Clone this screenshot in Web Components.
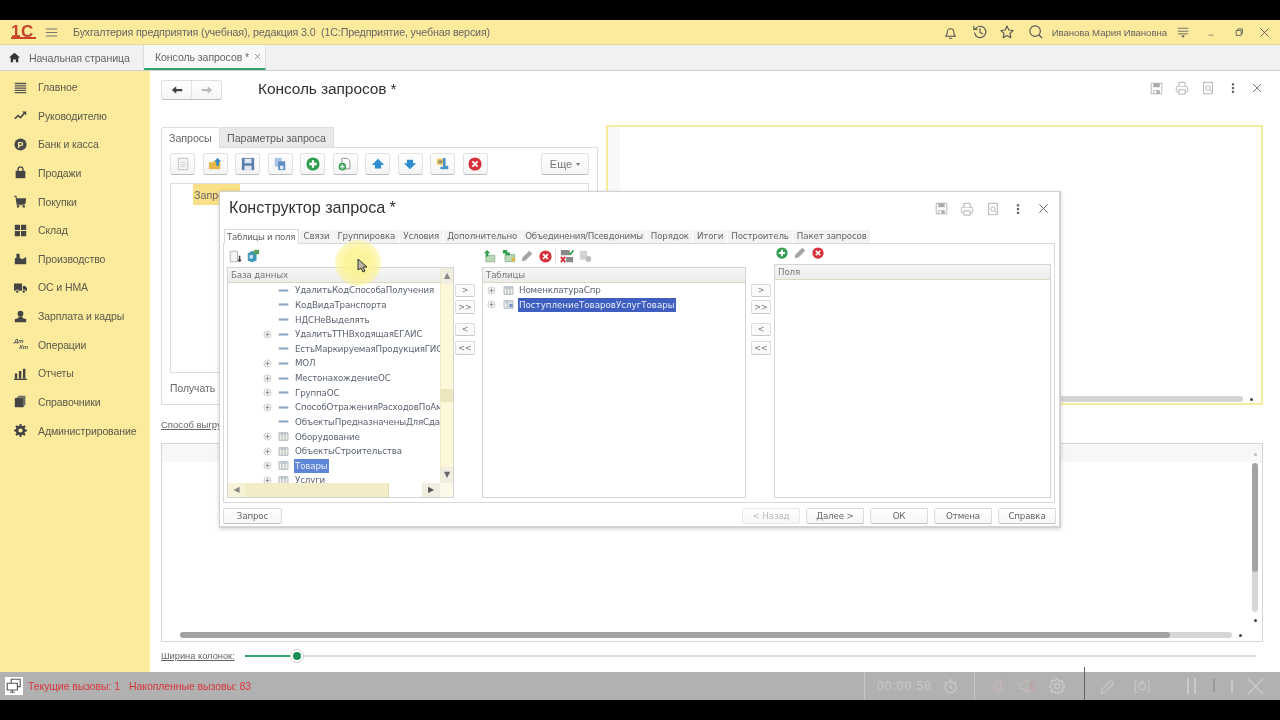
<!DOCTYPE html>
<html lang="ru"><head><meta charset="utf-8"><title>1С</title>
<style>
html,body{margin:0;height:720px;width:1280px;overflow:hidden;background:#000}
body{font:11px "Liberation Sans",Arial,sans-serif;color:#555}
one-c-app{filter:blur(.5px)}
</style></head><body>
<one-c-app></one-c-app>
<script>
const S='stroke-linecap="round" stroke-linejoin="round"';
const ICONS={
menu:'<path fill="#555" d="M1 2h14v2H1zM1 5.2h14v1.6H1zM1 8h14v1.6H1zM1 10.8h14v1.6H1zM1 13.4h14V15H1z"/>',
bars3:'<path fill="#777" d="M1 3h14v1.300H1zM1 7.300h14v1.300H1zM1 11.600h14v1.300H1z"/>',
trend:'<path fill="none" stroke="#444" stroke-width="2" d="M1 12l4-4 3 2.500L13 5"/><path fill="#444" d="M10 3h5v5z"/>',
bank:'<circle cx="8" cy="8" r="7.500" fill="#4a4a4a"/><text x="8" y="12" font-size="11" font-weight="700" text-anchor="middle" fill="#fdeea0" font-family="Liberation Sans">P</text>',
bag:'<path fill="#444" d="M2 6h12v9H2z"/><path fill="none" stroke="#444" stroke-width="1.600" d="M5 6V4a3 3 0 016 0v2"/>',
cart:'<path fill="#444" d="M3 4h12l-1 7H4z"/><path fill="none" stroke="#444" stroke-width="1.400" d="M0 1.500h2.400L4 12h9"/><circle cx="5" cy="14" r="1.500" fill="#444"/><circle cx="12" cy="14" r="1.500" fill="#444"/>',
stock:'<path fill="#444" d="M1 1h6.400v6.400H1zM8.600 1H15v6.400H8.600zM1 8.600h6.400V15H1zM8.600 8.600H15V15H8.600z"/>',
factory:'<path fill="#444" d="M1 15V8l2-1V2h4v5l3 2 5-3v9z"/><path fill="#fdeea0" d="M7 1h2v2H7z"/>',
truck:'<path fill="#444" d="M0 3h10v9H0zM11 6h3l2 3v3h-5z"/><circle cx="4" cy="13" r="2" fill="#444" stroke="#fdeea0"/><circle cx="12" cy="13" r="2" fill="#444" stroke="#fdeea0"/>',
person:'<circle cx="8" cy="4.500" r="3.500" fill="#444"/><path fill="#444" d="M6 8h4l1 2 4 1v4H1v-4l4-1z"/>',
reports:'<path fill="#444" d="M1 8h3v6H1zM6 5h3v9H6zM11 2h3v12h-3zM0 14.400h16V16H0z"/>',
books:'<path fill="#444" d="M1 4l3-1h8v12H1z"/><path fill="#6a6a6a" d="M5 1h9v12h-2V3H5z"/>',
gear:'<path fill="#444" d="M7 0h2l.4 2.300 1.500.6L12.800 1.500l1.600 1.600L13 5l.7 1.600L16 7v2l-2.300.4-.7 1.600 1.400 1.900-1.600 1.600-1.900-1.400-1.500.6L9 16H7l-.4-2.300-1.500-.6-1.900 1.400-1.600-1.600L3 11l-.7-1.600L0 9V7l2.300-.4L3 5 1.600 3.100l1.600-1.600 1.900 1.400 1.500-.6z"/><circle cx="8" cy="8" r="2.600" fill="#fdeea0"/>',
home:'<path fill="#333" d="M8 1L0 8h2.500v7H6v-4h4v4h3.500V8H16z"/>',
bell:`<path fill="none" stroke="#555" stroke-width="1.300" ${S} d="M2 12.500c1.500-1 2-2 2-5a4 4 0 018 0c0 3 .5 4 2 5zM6.500 15h3"/>`,
history:`<path fill="none" stroke="#555" stroke-width="1.300" ${S} d="M3 4a6.500 6.500 0 11-1.200 5M8 4v4.500l3 1.500M1 1.500V5h3.500"/>`,
star:`<path fill="none" stroke="#555" stroke-width="1.300" ${S} d="M8 1.200l2.100 4.500 4.900.6-3.600 3.300 1 4.900L8 12.100l-4.400 2.400 1-4.900L1 6.300l4.900-.6z"/>`,
search:`<circle cx="7" cy="7" r="6" fill="none" stroke="#555" stroke-width="1.300"/><path stroke="#555" stroke-width="1.500" d="M11.500 11.500l3.500 3.500"/>`,
lines:'<path stroke="#666" stroke-width="1.200" d="M1 3h14M1 7h14M1 10.500h14"/><path fill="#555" d="M5.500 12.500h5L8 15.500z"/>',
minimize:'<path stroke="#777" stroke-width="1.300" d="M4 13h8"/>',
restore:'<path fill="none" stroke="#555" stroke-width="1.300" d="M3.500 5.500h8v8h-8zM6 5.500V3h7.500v7.500H11.500"/>',
close:'<path stroke="#555" stroke-width="1.300" d="M2 2l12 12M14 2L2 14"/>',
back:'<path fill="#444" d="M7 3v3.500h8v3H7V13L1 8z"/>',
fwd:'<path fill="#bbb" d="M9 3v3.500H1v3h8V13l6-5z"/>',
save:'<path fill="none" stroke="#aaa" d="M1.500 1.500h13v13h-13z"/><path fill="#aaa" d="M4 1.500h8v5H4zM4 10h8v4.500H4z"/><path fill="#fff" d="M5 11h3v3H5z"/>',
print:'<rect x="1.500" y="6" width="13" height="6.500" rx="1.500" fill="none" stroke="#aaa"/><path fill="#fff" stroke="#aaa" d="M4.500 6V1.500h7V6M4.500 10h7v5h-7z"/>',
preview:'<path fill="none" stroke="#aaa" d="M3 1.500h10v13H3z"/><circle cx="8" cy="8" r="2.500" fill="none" stroke="#aaa"/><path stroke="#aaa" d="M10 10l2.500 2.500"/>',
dots:'<path fill="#666" d="M6.500 1.500h3v3h-3zM6.500 6.500h3v3h-3zM6.500 11.500h3v3h-3z"/>',
tdoc:'<path fill="#f5f5f5" stroke="#bbb" d="M2.500 1.500h11v13h-11z"/><path stroke="#ccc" d="M5 6h6M5 8.500h6M5 11h6"/>',
tfolder:'<path fill="#e8b84a" d="M1 6h5l1-2h7v10H1z"/><path fill="#2d86c8" d="M11 1l4 4h-2.500v5h-3V5H7z"/>',
tfloppy:'<path fill="#5d7fae" d="M1 1h14v14H1z"/><path fill="#dfe8f2" d="M4 2h8v5H4zM4 10h8v5H4z"/>',
tcopy:'<path fill="#a9c3e3" d="M2 1h8v10H2z"/><path fill="#5d8ac0" d="M6 5h8v10H6z"/><path fill="#dfe8f2" d="M8 10h4v4H8z"/>',
plus:'<circle cx="8" cy="8" r="7.500" fill="#2f9e4f"/><path stroke="#fff" stroke-width="2.600" d="M8 3.800v8.400M3.800 8h8.400"/>',
tdocplus:'<path fill="#fff" stroke="#888" d="M4.500 1.500h6l3 3v9h-9z"/><circle cx="5" cy="11" r="4.300" fill="#3da35a"/><path stroke="#fff" stroke-width="1.500" d="M5 8.500v5M2.500 11h5"/>',
up:'<path fill="#2d8fd0" d="M8 2l7 7h-3.500v4h-7V9H1z"/>',
down:'<path fill="#2d8fd0" d="M8 14L1 7h3.500V3h7v4H15z"/>',
tstamp:'<path fill="#e8c65a" d="M1 2h8v7H1z"/><path fill="#4d94c9" d="M8 1h3v9h3v4H5v-3h3z"/><path fill="#888" d="M3 4h4v3H3z"/>',
remove:'<circle cx="8" cy="8" r="7.500" fill="#d6313a"/><path stroke="#fff" stroke-width="2.200" d="M5 5l6 6M11 5l-6 6"/>',
listdoc:'<path fill="#f4f4f4" stroke="#aaa" d="M1.500 1.500h9v13h-9z"/><path fill="#444" d="M12 7h2v5h2l-3 3-3-3h2z"/>',
listgo:'<path fill="#3f97b8" d="M2 5l5-3 5 3v8l-5 2-5-2z"/><path fill="#57a05a" d="M9 1h6v5H9z"/><path fill="#c9e2ef" d="M4 7h4v4H4z"/>',
tbadd:'<path fill="#b9d9b9" stroke="#8ab08a" d="M3.500 6.500h11v8h-11z"/><path fill="#2f9e4f" d="M5 0l4 4H6.500v4h-3V4H1z"/>',
tbcopy:'<path fill="#b9d9b9" stroke="#8ab08a" d="M3.500 6.500h11v8h-11z"/><path fill="#2f9e4f" d="M1 1h5v3h3v3H4V5H1z"/><path fill="#e0b840" d="M11 10h4v4h-4z"/>',
pencil:'<path fill="#a5a5a5" d="M11 1l4 4-9 9-5 1 1-5z"/>',
grid:'<path fill="#8a8a8a" d="M1 1h10v6H1zM7 9h8v6H7z"/><path fill="none" stroke="#2f9e4f" stroke-width="1.800" d="M10 4l2 2 3.500-4.500"/><path stroke="#d6313a" stroke-width="2" d="M1 9l5 6M6 9l-5 6"/>',
grid2:'<path fill="#d4d4d4" d="M1 1h9v11H1z"/><circle cx="11.500" cy="11" r="3.500" fill="#bdbdbd"/>',
field:'<path fill="#8aa6c4" d="M1 6.500h14v3H1z"/>',
table:'<path fill="#f1f1ec" stroke="#8f9aa0" d="M1.500 2.500h13v11h-13z"/><path fill="#c9d3da" d="M2 3h12v2.500H2z"/><path stroke="#8f9aa0" d="M5.800 3v10M10.200 3v10"/>',
tablesel:'<path fill="#eef1f5" stroke="#8f9aa0" d="M1.500 2.500h13v11h-13z"/><path fill="#c9d3da" d="M2 3h12v2.500H2z"/><path stroke="#8f9aa0" d="M6 3v10"/><path fill="#7b95c8" d="M9 7h5v5H9z"/>',
expand:'<circle cx="8" cy="8" r="6.500" fill="#f0f0f0" stroke="#bbb"/><path stroke="#888" stroke-width="1.500" d="M4.500 8h7M8 4.500v7"/>',
monitor:'<path fill="#fff" d="M0 0h16v16H0z"/><path fill="none" stroke="#555" d="M5.500 2h8v6.500h-8z"/><path fill="#fff" stroke="#555" d="M2 5.500h9v6H2z"/><path stroke="#555" d="M4.500 13.500h4M6.500 11.500v2"/>',
watch:'<g fill="none" stroke="#c9c9c9" stroke-width="1.500"><circle cx="8" cy="9" r="5.800"/><path d="M8 6v3l2 1.500M6 1.200h4M2 3l2 2M14 3l-2 2"/></g>',
mic:'<g fill="none" stroke="#c8b8b8" stroke-width="1.200"><rect x="5.500" y="1" width="5" height="9.500" rx="2.500"/><path d="M2.500 8c0 7 11 7 11 0M8 13v2.500"/></g>',
speaker:'<path fill="none" stroke="#c5bcbc" d="M1 6h3l5-4v12l-5-4H1z"/><path fill="none" stroke="#c89b9b" d="M11 5c1.500 2 1.500 4 0 6M13 3c2.500 3 2.500 7 0 10"/>',
gearo:'<g fill="none" stroke="#c9c9c9" stroke-width="1.300"><circle cx="8" cy="8" r="2.500"/><path d="M7 1h2l.4 2 1.500.6 1.700-1.100 1.400 1.400-1.100 1.700.6 1.500 2 .4v2l-2 .4-.6 1.500 1.100 1.700-1.400 1.400-1.700-1.100-1.500.6-.4 2H7l-.4-2-1.500-.6-1.700 1.100-1.400-1.400 1.100-1.700-.6-1.500-2-.4V7l2-.4.6-1.500-1.100-1.700 1.400-1.400 1.700 1.100 1.500-.6z"/></g>',
pen:'<path fill="none" stroke="#c9c9c9" stroke-width="1.200" d="M11.500 1.500l3 3-9.500 9.500-4 1 1-4z"/>',
cam:'<g fill="none" stroke="#c9c9c9" stroke-width="1.200"><path d="M3 2H1v12h2M13 2h2v12h-2"/><circle cx="8" cy="8.500" r="3.300"/><path d="M6 3.500h4"/></g>',
xbig:'<path stroke="#c9c9c9" stroke-width="1.400" d="M1 1l14 14M15 1L1 15"/>'
};
function def(name,css,html){customElements.define(name,class extends HTMLElement{
 connectedCallback(){ if(this.shadowRoot) return; this.attachShadow({mode:'open'}).innerHTML='<style>'+css+'</style>'+(typeof html==='function'?html(this):html); }
});}
def('ui-icon',':host{display:inline-flex;flex:none;line-height:0}',h=>{const s=h.getAttribute('size')||16;return `<svg width="${s}" height="${s}" viewBox="0 0 16 16">${ICONS[h.getAttribute('name')]||''}</svg>`});

def('top-bar',`:host{display:flex;align-items:center;height:25px;background:#fceb9c;border-bottom:1px solid #e6d88e;box-sizing:border-box;color:#666;font-size:10.700px;letter-spacing:-.145px;position:relative}
.logo{font:bold 17px/12px "Liberation Sans",sans-serif;color:#c9442c;width:25px;margin-left:11px;border-bottom:2px solid #c9442c;height:11px;letter-spacing:.6px}
.t{margin-left:15px;white-space:pre;flex:1}
.r{display:flex;align-items:center;height:100%}.r ui-icon{position:relative}
.n{font-size:9.700px;margin:0 9px 0 9px;letter-spacing:-.1px;color:#666}`,
`<span class="logo">1С</span><ui-icon name="bars3" size="13" style="margin-left:9px"></ui-icon>
<span class="t">Бухгалтерия предприятия (учебная), редакция 3.0  (1С:Предприятие, учебная версия)</span>
<div class="r"><ui-icon name="bell" size="13"></ui-icon><ui-icon name="history" size="14" style="margin-left:16px"></ui-icon><ui-icon name="star" size="14" style="margin-left:13px"></ui-icon><ui-icon name="search" size="14" style="margin-left:15px"></ui-icon><span class="n">Иванова Мария Ивановна</span><ui-icon name="lines" size="12" style="margin-left:1px"></ui-icon><ui-icon name="minimize" size="10" style="margin-left:17px"></ui-icon><ui-icon name="restore" size="10" style="margin-left:18px"></ui-icon><ui-icon name="close" size="11" style="margin:0 10px 0 15px"></ui-icon></div>`);

def('section-tabs',`:host{display:flex;height:26px;background:#f1f1f1;border-bottom:1px solid #cfcfcf;box-sizing:border-box;align-items:stretch;font-size:10.600px;color:#666;letter-spacing:-.1px}
.h{display:flex;align-items:center;width:144px;padding-left:9px;box-sizing:border-box;gap:9px;border-right:1px solid #ddd}
.a{display:flex;align-items:center;width:122px;padding-left:11px;box-sizing:border-box;background:#f8f8f8;border-bottom:2px solid #2fa36b;gap:4px;font-size:10.600px;border-right:1px solid #ddd}`,
`<div class="h"><ui-icon name="home" size="11"></ui-icon><span>Начальная страница</span></div><div class="a"><span>Консоль запросов *</span><ui-icon name="close" size="7" style="margin-left:1px"></ui-icon></div>`);

def('nav-item',`:host{display:flex;align-items:center;height:28.630px;padding-left:14px;font-size:10.500px;color:#5a5a4c;letter-spacing:-.1px}
.i{width:24px;display:flex}.dk{font:italic bold 6px/6px "Liberation Sans",sans-serif;color:#555;width:14px;height:14px}.dk div:last-child{text-align:right}`,
h=>{const n=h.getAttribute('icon');return `<span class="i">${n==='dk'?'<span class="dk"><div>Дт</div><div>Кт</div></span>':`<ui-icon name="${n}" size="13"></ui-icon>`}</span><slot></slot>`});
def('side-nav',`:host{display:block;width:150px;flex:none;background:#fceb9c;padding-top:1.700px;box-sizing:border-box}`,'<slot></slot>');

def('tool-button',`:host{display:inline-flex;align-items:center;justify-content:center;width:25px;height:22px;box-sizing:border-box;border:1px solid #e2e2e2;border-bottom-color:#bdbdbd;border-radius:3px;background:linear-gradient(#fff,#f4f4f4);font-size:11px;color:#777}`,
h=>`<ui-icon name="${h.getAttribute('icon')}" size="${h.getAttribute('size')||14}"></ui-icon>`);
def('head-icons',`:host{display:flex;align-items:center;position:relative}`,h=>{const g=h.getAttribute('close')||'10';return `<ui-icon name="save" size="13"></ui-icon><ui-icon name="print" size="14" style="margin-left:12px"></ui-icon><ui-icon name="preview" size="14" style="margin-left:12px"></ui-icon><ui-icon name="dots" size="12" style="margin-left:12px"></ui-icon><ui-icon name="close" size="${g}" style="margin-left:${h.getAttribute('gap')||13}px"></ui-icon>`});

def('query-console',`:host{display:block;position:relative;flex:1;min-width:0;background:#fff;box-sizing:border-box;padding:0 17px 0 11px;height:601px;color:#666}
.head{height:54px;display:flex;align-items:flex-start;position:relative}
.nav{margin-top:9px;width:61px;height:20px;box-sizing:border-box;border:1px solid #e0e0e0;border-bottom-color:#bdbdbd;border-radius:3px;display:flex;background:linear-gradient(#fff,#f5f5f5)}
.nav span{flex:1;display:flex;align-items:center;justify-content:center}.nav span:first-child{border-right:1px solid #e4e4e4}
h1{font:400 15.500px/18px "Liberation Sans",sans-serif;color:#333;margin:9px 0 0 36px;flex:1;letter-spacing:-.1px}
head-icons{margin:10px 0 0 0;padding-right:1px}
.work{display:flex;height:280px;gap:8px}
.left{width:437px;padding-top:2px;box-sizing:border-box;display:flex;flex-direction:column}
.tabs{display:flex;height:20px;font-size:10.700px;letter-spacing:-.05px}
.tabs span{display:flex;align-items:center;padding:0 7px;box-sizing:border-box;height:21px;position:relative;white-space:nowrap}
.tabs .on{width:59px;border:1px solid #ddd;border-bottom:0;background:#fff;z-index:1;border-radius:3px 3px 0 0}.tabs .off{width:114px;background:#e9e9e9;border:1px solid #ddd;border-left:0;border-bottom:0;color:#5f5f5f;height:20px}
.panel{flex:1;border:1px solid #ddd;padding:5px 8px 0;box-sizing:border-box}
.bar{display:flex;gap:7.500px;height:30px;align-items:flex-start}
.more{margin-left:auto;width:48px;height:22px;box-sizing:border-box;border:1px solid #e2e2e2;border-bottom-color:#bdbdbd;border-radius:3px;background:linear-gradient(#fff,#f4f4f4);display:flex;align-items:center;justify-content:center;font-size:11px;gap:4px;color:#777}
.more i{border:2px solid transparent;border-top:3px solid #777;margin-top:3px}
.list{height:190px;border:1px solid #ddd;box-sizing:border-box;padding-left:22px}
.cell{display:block;width:47px;height:21px;background:#fbe08a;line-height:23px;padding-left:1px;box-sizing:border-box;font-size:10.700px;color:#666;overflow:hidden;white-space:nowrap}
.get{margin-top:10px;font-size:10.300px}
.editor{flex:1;position:relative;border:2px solid #f7eb9f;box-sizing:border-box;display:flex}
.gut{width:12px;background:#f8f8f8}
.hs{position:absolute;left:10px;right:18px;bottom:1px;height:6px;background:#d4d4d4;border-radius:3px}
.arr{position:absolute;right:8px;bottom:2px;width:3px;height:3px;background:#444;border-radius:50%}
.way{height:38px;display:flex;align-items:center;font-size:9.500px;text-decoration:underline;padding-top:1px;box-sizing:border-box;white-space:nowrap}
.grid{height:199px;position:relative;border:1px solid #d5d5d5;box-sizing:border-box}
.ghead{height:18px;background:#f7f7f7}
.v1,.v2{position:absolute;right:4px;width:6px;border-radius:3px}
.v2{top:21px;height:147px;background:#d6d6d6}.v1{top:19px;height:109px;background:#a3a3a3}
.h2,.h1{position:absolute;bottom:3px;height:6px;left:18px;border-radius:3px}.h2{width:1052px;background:#d6d6d6}.h1{width:990px;background:#a3a3a3}
.dot{position:absolute;width:3px;height:3px;background:#444;border-radius:50%}
.slide{height:30px;display:flex;align-items:center;padding-bottom:2px;box-sizing:border-box}
.slide u{font-size:9.300px;width:84px;flex:none;color:#666}
.track{flex:1;height:2px;background:#ddd;position:relative;margin-right:7px}
.track b{position:absolute;left:0;top:0;height:2px;width:52px;background:#2fa36b}
.thumb{position:absolute;left:45px;top:-6px;width:14px;height:14px;box-sizing:border-box;border:3px solid #fff;outline:1px solid #ccc;outline-offset:-1px;border-radius:50%;background:#1c8f58}`,
`<div class="head"><div class="nav"><span><ui-icon name="back" size="12"></ui-icon></span><span><ui-icon name="fwd" size="12"></ui-icon></span></div><h1>Консоль запросов *</h1><head-icons></head-icons></div>
<div class="work"><div class="left"><div class="tabs"><span class="on">Запросы</span><span class="off">Параметры запроса</span></div>
<div class="panel"><div class="bar">
<tool-button icon="tdoc"></tool-button><tool-button icon="tfolder"></tool-button><tool-button icon="tfloppy"></tool-button><tool-button icon="tcopy"></tool-button><tool-button icon="plus"></tool-button><tool-button icon="tdocplus"></tool-button><tool-button icon="up"></tool-button><tool-button icon="down"></tool-button><tool-button icon="tstamp"></tool-button><tool-button icon="remove"></tool-button><div class="more">Еще<i></i></div></div>
<div class="list"><span class="cell">Запрос</span></div><div class="get">Получать</div></div></div>
<div class="editor"><div class="gut"></div><div class="hs"></div><div class="arr"></div></div></div>
<div class="way">Способ выгрузки</div>
<div class="grid"><div class="ghead"></div><div class="v2"></div><div class="v1"></div><div class="h2"></div><div class="h1"></div>
<div class="dot" style="right:5px;top:9px;background:#bbb"></div><div class="dot" style="right:5px;top:175px"></div><div class="dot" style="right:20px;bottom:4px"></div></div>
<div class="slide"><u>Ширина колонок:</u><div class="track"><b></b><div class="thumb"></div></div></div>
<query-dialog></query-dialog>`);

def('tree-row',`:host{display:flex;align-items:center;height:14.630px;font:8.700px "DejaVu Sans",sans-serif;letter-spacing:-.15px;color:#5c6470;white-space:nowrap;box-sizing:border-box}
.e{width:10px;display:flex;flex:none}.ic{width:var(--icw,16px);display:flex;margin-left:var(--ic,2px);flex:none}
.t{padding:0 1px;line-height:14px;height:14px;flex:none}.t.s{background:var(--sel,#5f86d6);color:#e8edf8}`,
h=>{const ex=h.hasAttribute('exp'),ic=h.getAttribute('icon')||'field';return `<span class="e">${ex?'<ui-icon name="expand" size="9"></ui-icon>':''}</span><span class="ic"><ui-icon name="${ic}" size="11"></ui-icon></span><span class="t ${h.hasAttribute('sel')?'s':''}"><slot></slot></span>`});

def('data-box',`:host{display:flex;flex-direction:column;box-sizing:border-box;border:1px solid #d4d4d4;background:#fff;min-height:0;min-width:0}
.hd{height:15px;box-sizing:border-box;flex:none;background:linear-gradient(#f6f6f6,#ececec);border-bottom:1px solid #dcd9bd;font:8.700px/14px "DejaVu Sans",sans-serif;letter-spacing:-.15px;color:#777;padding-left:3px}
.body{flex:1;min-height:0}`,
h=>`<div class="hd">${h.getAttribute('title')}</div><div class="body"><slot></slot></div>`);

def('move-buttons',`:host{display:flex;flex-direction:column;width:20px;flex:none;padding-top:17px;box-sizing:border-box}
span{display:flex;align-items:center;justify-content:center;height:13px;border:1px solid #dcdcdc;border-bottom-color:#c8c8c8;border-radius:2px;background:#fafafa;font:8px "DejaVu Sans",sans-serif;color:#777;box-sizing:border-box;margin-bottom:3px}
span:nth-of-type(2){height:14px;margin-bottom:9px}span:nth-of-type(3){margin-bottom:5px}span:nth-of-type(4){height:14px}`,
`<span>&gt;</span><span>&gt;&gt;</span><span>&lt;</span><span>&lt;&lt;</span>`);

def('dlg-button',`:host{display:inline-flex;align-items:center;justify-content:center;width:58px;height:16px;box-sizing:border-box;border:1px solid #dadada;border-bottom-color:#c4c4c4;border-radius:2px;background:linear-gradient(#fff,#f6f6f6);font:8.700px "DejaVu Sans",sans-serif;letter-spacing:-.15px;color:#666}
:host([off]){color:#bbb;border-color:#e8e8e8}`,'<slot></slot>');

def('query-dialog',`:host{position:absolute;left:69px;top:120px;width:842px;height:337px;background:#fff;border:1px solid #d2d2d2;border-bottom-width:2px;border-right-width:2px;box-sizing:border-box;box-shadow:0 1px 4px rgba(0,0,0,.18);display:flex;flex-direction:column}
.top{display:flex;height:35px;align-items:center;flex:none;padding-left:9px}
h2{font:400 16.200px "Liberation Sans",sans-serif;color:#333;margin:0;flex:1;letter-spacing:-.05px;position:relative;top:-2px}
head-icons{margin-right:10px;top:-1px}
.tabs{display:flex;height:15px;margin-left:4px;flex:none;font:8.700px/14px "DejaVu Sans",sans-serif;letter-spacing:-.15px;color:#666;margin-top:1px;align-items:flex-end}
.tabs span{height:13px;line-height:13px;background:#f3f3f3;padding:0 3.500px;margin-right:1px;white-space:nowrap}
.tabs .on{height:15px;line-height:15px;background:#fff;border:1px solid #d9d9d9;border-bottom:0;box-sizing:border-box;padding:0 2px;margin-right:1px;position:relative;top:1px;width:75px;letter-spacing:-.35px}
.tabs .wide{letter-spacing:-.28px}
.pane{margin:0 4px 0 3px;height:260px;flex:none;border:1px solid #d9d9d9;box-sizing:border-box;padding:0 2px 4px 3px;display:flex}
.col{display:flex;flex-direction:column;min-width:0}
.tb{height:23px;display:flex;align-items:center;flex:none;gap:3.500px;padding-left:2px;padding-top:1px;box-sizing:border-box}
.c1{width:227px}.c2{width:264px;margin-left:7px}.c3{width:277px;margin-left:3px}
.c3 .tb{height:20px;gap:6px;padding-left:2px;padding-top:3px;align-items:flex-start}
data-box{flex:1}
.treewrap{position:relative;height:100%}
.mv{margin-top:23px}.m2{margin-left:5px;}.m1{margin-left:1px}
.tree{position:absolute;left:0;top:0;right:13px;bottom:14px;overflow:hidden;padding-left:35px;--ic:5px}
.vs{position:absolute;right:0;top:-15px;bottom:14px;width:13px;background:#fdf8d9;border-left:1px solid #eee9c5;box-sizing:border-box}
.vs i{position:absolute;left:0;right:0;display:block}
.up{top:0;height:16px;background:#f0eee0;color:#888;font:normal 8px/16px "DejaVu Sans",sans-serif;text-align:center}
.th{top:121px;height:13px;background:#ece6bd}
.dn{bottom:0;height:16px;background:#f0eee0;color:#666;font:normal 8px/16px "DejaVu Sans",sans-serif;text-align:center}
.hb{position:absolute;left:0;right:0;bottom:0;height:14px;background:#fff;display:flex;font:8px/14px "DejaVu Sans",sans-serif;color:#888;text-align:center}
.hb i{font-style:normal;display:block}.hb .l{width:17px;background:#f6f3d8}.hb .m{width:143px;background:#f2edc6;border-right:1px solid #e0dcae}.hb .g{flex:1}.hb .r{width:18px;background:#f0eee0;color:#555}.hb .e{width:13px;background:#fbf9e8}
.foot{display:flex;flex:1;align-items:center;padding:2px 3px 0 3px;gap:6px}
.foot dlg-button:first-child{margin-right:auto}
.sep{width:1px;height:14px;background:#ddd;margin:0 -2px}
.halo{position:absolute;left:115px;top:48px;width:46px;height:46px;border-radius:50%;background:radial-gradient(circle,rgba(252,243,140,.85) 0 40%,rgba(252,243,140,.5) 70%,rgba(252,243,140,0) 100%);pointer-events:none}
.cur{position:absolute;left:137px;top:66px;pointer-events:none}`,
`<div class="top"><h2>Конструктор запроса *</h2><head-icons gap="14" close="11"></head-icons></div>
<div class="tabs"><span class="on">Таблицы и поля</span><span>Связи</span><span>Группировка</span><span>Условия</span><span>Дополнительно</span><span class="wide">Объединения/Псевдонимы</span><span>Порядок</span><span>Итоги</span><span>Построитель</span><span>Пакет запросов</span></div>
<div class="pane">
<div class="col c1"><div class="tb"><ui-icon name="listdoc" size="13"></ui-icon><ui-icon name="listgo" size="14"></ui-icon></div>
<data-box title="База данных"><div class="treewrap"><div class="tree">
<tree-row>УдалитьКодСпособаПолучения</tree-row><tree-row>КодВидаТранспорта</tree-row><tree-row>НДСНеВыделять</tree-row><tree-row exp>УдалитьТТНВходящаяЕГАИС</tree-row><tree-row>ЕстьМаркируемаяПродукцияГИС</tree-row><tree-row exp>МОЛ</tree-row><tree-row exp>МестонахождениеОС</tree-row><tree-row exp>ГруппаОС</tree-row><tree-row exp>СпособОтраженияРасходовПоАм</tree-row><tree-row>ОбъектыПредназначеныДляСдач</tree-row><tree-row exp icon="table">Оборудование</tree-row><tree-row exp icon="table">ОбъектыСтроительства</tree-row><tree-row exp icon="table" sel>Товары</tree-row><tree-row exp icon="table">Услуги</tree-row></div>
<div class="vs"><i class="up">▲</i><i class="th"></i><i class="dn">▼</i></div>
<div class="hb"><i class="l">◀</i><i class="m"></i><i class="g"></i><i class="r">▶</i><i class="e"></i></div></div></data-box></div>
<div class="col mv m1"><move-buttons></move-buttons></div>
<div class="col c2"><div class="tb" style="gap:5.500px;padding-left:1px"><ui-icon name="tbadd" size="13"></ui-icon><ui-icon name="tbcopy" size="14"></ui-icon><ui-icon name="pencil" size="12"></ui-icon><ui-icon name="remove" size="13"></ui-icon><span class="sep"></span><ui-icon name="grid" size="14"></ui-icon><ui-icon name="grid2" size="13"></ui-icon></div>
<data-box title="Таблицы"><div style="padding-left:4px;--ic:6px;--icw:15px;--sel:#3f5fc0"><tree-row exp icon="table">НоменклатураСпр</tree-row><tree-row exp icon="tablesel" sel style="letter-spacing:-.01px">ПоступлениеТоваровУслугТовары</tree-row></div></data-box></div>
<div class="col mv m2"><move-buttons></move-buttons></div>
<div class="col c3"><div class="tb"><ui-icon name="plus" size="12"></ui-icon><ui-icon name="pencil" size="12"></ui-icon><ui-icon name="remove" size="12"></ui-icon></div><data-box title="Поля"></data-box></div>
</div>
<div class="foot"><dlg-button style="width:59px">Запрос</dlg-button><dlg-button off>&lt; Назад</dlg-button><dlg-button>Далее &gt;</dlg-button><dlg-button>ОК</dlg-button><dlg-button>Отмена</dlg-button><dlg-button>Справка</dlg-button></div>
<div class="halo"></div><svg class="cur" width="12" height="16" viewBox="0 0 12 16"><path fill="#b9b7a0" stroke="#333" d="M1 1l0 11 3-2 2 4 2-1-2-4h4z"/></svg>`);

def('status-bar',`:host{display:flex;align-items:center;height:28px;background:#b1b1b1;position:relative;font-size:10.500px;color:#d8363c;letter-spacing:-.08px;padding-left:5px;box-sizing:border-box}
.m{margin-left:5px}.a{margin-left:9px}
.rec{position:absolute;left:864px;right:8px;top:0;bottom:0;display:flex;align-items:center;color:#c9c9c9;font-size:12.300px}
.s{position:absolute;top:0;bottom:0;width:1px;background:#c8c8c8}
.rec>ui-icon,.rec>span{position:absolute}
.b{background:#c9c9c9;width:2px;position:absolute}`,
`<ui-icon name="monitor" size="18"></ui-icon><span class="m">Текущие вызовы: 1</span><span class="a">Накопленные вызовы: 83</span>
<div class="rec"><div class="s" style="left:0"></div><span style="left:13px;letter-spacing:.9px">00:00:58</span><ui-icon name="watch" size="15" style="left:79px"></ui-icon><div class="s" style="left:110px"></div><ui-icon name="mic" size="15" style="left:127px"></ui-icon><ui-icon name="speaker" size="18" style="left:154px"></ui-icon><ui-icon name="gearo" size="16" style="left:185px"></ui-icon><div class="s" style="left:220px;top:-5px;background:#666"></div><ui-icon name="pen" size="15" style="left:236px"></ui-icon><ui-icon name="cam" size="16" style="left:270px"></ui-icon><div class="b" style="left:323px;top:6px;height:16px"></div><div class="b" style="left:330px;top:6px;height:16px"></div><div class="b" style="left:349px;top:7px;height:13px;background:#999"></div><div class="b" style="left:367px;top:7px;height:13px"></div><ui-icon name="xbig" size="17" style="left:383px"></ui-icon></div>`);

def('one-c-app',`:host{display:flex;flex-direction:column;width:1280px;height:720px;background:#000;padding:20px 0;box-sizing:border-box}
.main{display:flex;height:601px}`,
`<top-bar></top-bar><section-tabs></section-tabs><div class="main"><side-nav>
<nav-item icon="menu">Главное</nav-item><nav-item icon="trend">Руководителю</nav-item><nav-item icon="bank">Банк и касса</nav-item><nav-item icon="bag">Продажи</nav-item><nav-item icon="cart">Покупки</nav-item><nav-item icon="stock">Склад</nav-item><nav-item icon="factory">Производство</nav-item><nav-item icon="truck">ОС и НМА</nav-item><nav-item icon="person">Зарплата и кадры</nav-item><nav-item icon="dk">Операции</nav-item><nav-item icon="reports">Отчеты</nav-item><nav-item icon="books">Справочники</nav-item><nav-item icon="gear">Администрирование</nav-item>
</side-nav><query-console></query-console></div><status-bar></status-bar>`);
</script>
</body></html>
